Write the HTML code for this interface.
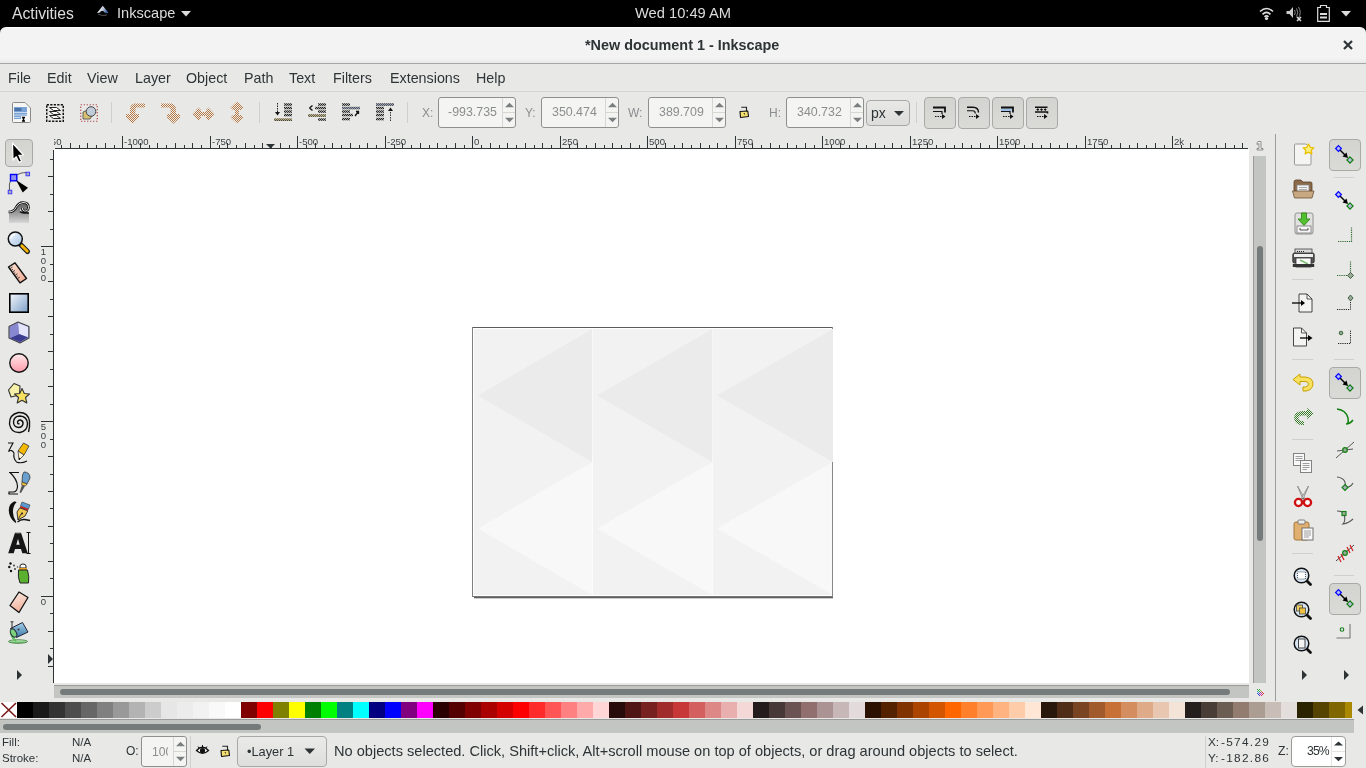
<!DOCTYPE html>
<html><head><meta charset="utf-8">
<style>
*{box-sizing:border-box}
html,body{margin:0;padding:0;width:1366px;height:768px;overflow:hidden;background:#e8e8e7;font-family:"Liberation Sans",sans-serif;color:#2e3436}
.a{position:absolute}
.t{position:absolute;white-space:pre;line-height:1;will-change:transform}
svg{position:absolute;overflow:visible}
</style></head><body>
<!-- top bar -->
<div class="a" style="left:0;top:0;width:1366px;height:36px;background:#000"></div>
<div class="t" style="left:12px;top:6px;font-size:15.7px;color:#dcdcdc">Activities</div>
<div class="t" style="left:117px;top:6px;font-size:14.6px;color:#dcdcdc">Inkscape</div>
<div class="t" style="left:635px;top:6px;font-size:14.7px;color:#dcdcdc">Wed 10:49 AM</div>

<!-- title bar -->
<div class="a" style="left:0;top:27px;width:1366px;height:37px;background:linear-gradient(#f3f3f3,#f3f3f3 86%,#e9e9e9);border-radius:6px 6px 0 0;border-top:1px solid #fff;border-bottom:1px solid #a6a6a3"></div>
<div class="t" style="left:585px;top:38px;font-size:14.4px;font-weight:bold;color:#2e3436">*New document 1 - Inkscape</div>

<!-- menubar -->
<div class="a" style="left:0;top:64px;width:1366px;height:29px;background:linear-gradient(#e8e8e7 0,#e8e8e7 26px,#ebebea 26px,#ebebea 27px,#d2d2d0 27px,#d2d2d0 28px,#ebebea 28px)"></div>
<div class="t" style="left:8px;top:71px;font-size:14.3px">File</div>
<div class="t" style="left:47px;top:71px;font-size:14.3px">Edit</div>
<div class="t" style="left:87px;top:71px;font-size:14.3px">View</div>
<div class="t" style="left:135px;top:71px;font-size:14.3px">Layer</div>
<div class="t" style="left:186px;top:71px;font-size:14.3px">Object</div>
<div class="t" style="left:244px;top:71px;font-size:14.3px">Path</div>
<div class="t" style="left:289px;top:71px;font-size:14.3px">Text</div>
<div class="t" style="left:333px;top:71px;font-size:14.3px">Filters</div>
<div class="t" style="left:390px;top:71px;font-size:14.3px">Extensions</div>
<div class="t" style="left:476px;top:71px;font-size:14.3px">Help</div>

<!-- canvas -->
<div class="a" style="left:54px;top:149px;width:1195px;height:534px;background:#fff"></div>

<!-- rulers -->
<div class="a" style="left:55px;top:148px;width:1193px;height:1px;background:#2e3436"></div>
<div class="a" style="left:53px;top:150px;width:1px;height:533px;background:#2e3436"></div>

<!-- v scrollbar -->
<div class="a" style="left:1253px;top:156px;width:13px;height:527px;background:#c3c5c3;border-left:1px solid #9a9b98"></div>
<div class="a" style="left:1257px;top:246px;width:6px;height:295px;background:#757a7a;border-radius:3px"></div>
<div class="a" style="left:1275px;top:134px;width:1px;height:567px;background:#9c9c99"></div>

<!-- h scrollbar -->
<div class="a" style="left:54px;top:685px;width:1195px;height:13px;background:#c3c5c3;border-top:1px solid #9a9b98"></div>
<div class="a" style="left:60px;top:689px;width:1170px;height:6px;background:#757a7a;border-radius:3px"></div>

<!-- palette -->
<div class="a" style="left:0;top:719px;width:1354px;height:14px;background:#c3c5c3;border-top:1px solid #9a9b98"></div>
<div class="a" style="left:3px;top:724px;width:258px;height:6px;background:#757a7a;border-radius:3px"></div>

<!--RULERH--><svg style="left:0;top:0" width="1366" height="160"><defs><clipPath id="hc"><rect x="54" y="130" width="1194" height="20"/></clipPath></defs><g clip-path="url(#hc)"><line x1="35.5" y1="136" x2="35.5" y2="149" stroke="#2e3436" stroke-width="1"/><text x="37.0" y="145" font-size="9.6" fill="#3a3f41" font-family="Liberation Sans">-1250</text><line x1="44.5" y1="145" x2="44.5" y2="149" stroke="#2e3436" stroke-width="1"/><line x1="52.5" y1="143" x2="52.5" y2="149" stroke="#2e3436" stroke-width="1"/><line x1="61.5" y1="145" x2="61.5" y2="149" stroke="#2e3436" stroke-width="1"/><line x1="70.5" y1="143" x2="70.5" y2="149" stroke="#2e3436" stroke-width="1"/><line x1="79.5" y1="145" x2="79.5" y2="149" stroke="#2e3436" stroke-width="1"/><line x1="87.5" y1="143" x2="87.5" y2="149" stroke="#2e3436" stroke-width="1"/><line x1="96.5" y1="145" x2="96.5" y2="149" stroke="#2e3436" stroke-width="1"/><line x1="105.5" y1="143" x2="105.5" y2="149" stroke="#2e3436" stroke-width="1"/><line x1="114.5" y1="145" x2="114.5" y2="149" stroke="#2e3436" stroke-width="1"/><line x1="122.5" y1="136" x2="122.5" y2="149" stroke="#2e3436" stroke-width="1"/><text x="124.0" y="145" font-size="9.6" fill="#3a3f41" font-family="Liberation Sans">-1000</text><line x1="131.5" y1="145" x2="131.5" y2="149" stroke="#2e3436" stroke-width="1"/><line x1="140.5" y1="143" x2="140.5" y2="149" stroke="#2e3436" stroke-width="1"/><line x1="149.5" y1="145" x2="149.5" y2="149" stroke="#2e3436" stroke-width="1"/><line x1="157.5" y1="143" x2="157.5" y2="149" stroke="#2e3436" stroke-width="1"/><line x1="166.5" y1="145" x2="166.5" y2="149" stroke="#2e3436" stroke-width="1"/><line x1="175.5" y1="143" x2="175.5" y2="149" stroke="#2e3436" stroke-width="1"/><line x1="184.5" y1="145" x2="184.5" y2="149" stroke="#2e3436" stroke-width="1"/><line x1="192.5" y1="143" x2="192.5" y2="149" stroke="#2e3436" stroke-width="1"/><line x1="201.5" y1="145" x2="201.5" y2="149" stroke="#2e3436" stroke-width="1"/><line x1="210.5" y1="136" x2="210.5" y2="149" stroke="#2e3436" stroke-width="1"/><text x="212.0" y="145" font-size="9.6" fill="#3a3f41" font-family="Liberation Sans">-750</text><line x1="219.5" y1="145" x2="219.5" y2="149" stroke="#2e3436" stroke-width="1"/><line x1="227.5" y1="143" x2="227.5" y2="149" stroke="#2e3436" stroke-width="1"/><line x1="236.5" y1="145" x2="236.5" y2="149" stroke="#2e3436" stroke-width="1"/><line x1="245.5" y1="143" x2="245.5" y2="149" stroke="#2e3436" stroke-width="1"/><line x1="254.5" y1="145" x2="254.5" y2="149" stroke="#2e3436" stroke-width="1"/><line x1="262.5" y1="143" x2="262.5" y2="149" stroke="#2e3436" stroke-width="1"/><line x1="271.5" y1="145" x2="271.5" y2="149" stroke="#2e3436" stroke-width="1"/><line x1="280.5" y1="143" x2="280.5" y2="149" stroke="#2e3436" stroke-width="1"/><line x1="289.5" y1="145" x2="289.5" y2="149" stroke="#2e3436" stroke-width="1"/><line x1="297.5" y1="136" x2="297.5" y2="149" stroke="#2e3436" stroke-width="1"/><text x="299.0" y="145" font-size="9.6" fill="#3a3f41" font-family="Liberation Sans">-500</text><line x1="306.5" y1="145" x2="306.5" y2="149" stroke="#2e3436" stroke-width="1"/><line x1="315.5" y1="143" x2="315.5" y2="149" stroke="#2e3436" stroke-width="1"/><line x1="324.5" y1="145" x2="324.5" y2="149" stroke="#2e3436" stroke-width="1"/><line x1="332.5" y1="143" x2="332.5" y2="149" stroke="#2e3436" stroke-width="1"/><line x1="341.5" y1="145" x2="341.5" y2="149" stroke="#2e3436" stroke-width="1"/><line x1="350.5" y1="143" x2="350.5" y2="149" stroke="#2e3436" stroke-width="1"/><line x1="359.5" y1="145" x2="359.5" y2="149" stroke="#2e3436" stroke-width="1"/><line x1="367.5" y1="143" x2="367.5" y2="149" stroke="#2e3436" stroke-width="1"/><line x1="376.5" y1="145" x2="376.5" y2="149" stroke="#2e3436" stroke-width="1"/><line x1="385.5" y1="136" x2="385.5" y2="149" stroke="#2e3436" stroke-width="1"/><text x="387.0" y="145" font-size="9.6" fill="#3a3f41" font-family="Liberation Sans">-250</text><line x1="394.5" y1="145" x2="394.5" y2="149" stroke="#2e3436" stroke-width="1"/><line x1="402.5" y1="143" x2="402.5" y2="149" stroke="#2e3436" stroke-width="1"/><line x1="411.5" y1="145" x2="411.5" y2="149" stroke="#2e3436" stroke-width="1"/><line x1="420.5" y1="143" x2="420.5" y2="149" stroke="#2e3436" stroke-width="1"/><line x1="429.5" y1="145" x2="429.5" y2="149" stroke="#2e3436" stroke-width="1"/><line x1="437.5" y1="143" x2="437.5" y2="149" stroke="#2e3436" stroke-width="1"/><line x1="446.5" y1="145" x2="446.5" y2="149" stroke="#2e3436" stroke-width="1"/><line x1="455.5" y1="143" x2="455.5" y2="149" stroke="#2e3436" stroke-width="1"/><line x1="464.5" y1="145" x2="464.5" y2="149" stroke="#2e3436" stroke-width="1"/><line x1="472.5" y1="136" x2="472.5" y2="149" stroke="#2e3436" stroke-width="1"/><text x="474.0" y="145" font-size="9.6" fill="#3a3f41" font-family="Liberation Sans">0</text><line x1="481.5" y1="145" x2="481.5" y2="149" stroke="#2e3436" stroke-width="1"/><line x1="490.5" y1="143" x2="490.5" y2="149" stroke="#2e3436" stroke-width="1"/><line x1="499.5" y1="145" x2="499.5" y2="149" stroke="#2e3436" stroke-width="1"/><line x1="507.5" y1="143" x2="507.5" y2="149" stroke="#2e3436" stroke-width="1"/><line x1="516.5" y1="145" x2="516.5" y2="149" stroke="#2e3436" stroke-width="1"/><line x1="525.5" y1="143" x2="525.5" y2="149" stroke="#2e3436" stroke-width="1"/><line x1="534.5" y1="145" x2="534.5" y2="149" stroke="#2e3436" stroke-width="1"/><line x1="542.5" y1="143" x2="542.5" y2="149" stroke="#2e3436" stroke-width="1"/><line x1="551.5" y1="145" x2="551.5" y2="149" stroke="#2e3436" stroke-width="1"/><line x1="560.5" y1="136" x2="560.5" y2="149" stroke="#2e3436" stroke-width="1"/><text x="562.0" y="145" font-size="9.6" fill="#3a3f41" font-family="Liberation Sans">250</text><line x1="569.5" y1="145" x2="569.5" y2="149" stroke="#2e3436" stroke-width="1"/><line x1="577.5" y1="143" x2="577.5" y2="149" stroke="#2e3436" stroke-width="1"/><line x1="586.5" y1="145" x2="586.5" y2="149" stroke="#2e3436" stroke-width="1"/><line x1="595.5" y1="143" x2="595.5" y2="149" stroke="#2e3436" stroke-width="1"/><line x1="604.5" y1="145" x2="604.5" y2="149" stroke="#2e3436" stroke-width="1"/><line x1="612.5" y1="143" x2="612.5" y2="149" stroke="#2e3436" stroke-width="1"/><line x1="621.5" y1="145" x2="621.5" y2="149" stroke="#2e3436" stroke-width="1"/><line x1="630.5" y1="143" x2="630.5" y2="149" stroke="#2e3436" stroke-width="1"/><line x1="639.5" y1="145" x2="639.5" y2="149" stroke="#2e3436" stroke-width="1"/><line x1="647.5" y1="136" x2="647.5" y2="149" stroke="#2e3436" stroke-width="1"/><text x="649.0" y="145" font-size="9.6" fill="#3a3f41" font-family="Liberation Sans">500</text><line x1="656.5" y1="145" x2="656.5" y2="149" stroke="#2e3436" stroke-width="1"/><line x1="665.5" y1="143" x2="665.5" y2="149" stroke="#2e3436" stroke-width="1"/><line x1="674.5" y1="145" x2="674.5" y2="149" stroke="#2e3436" stroke-width="1"/><line x1="682.5" y1="143" x2="682.5" y2="149" stroke="#2e3436" stroke-width="1"/><line x1="691.5" y1="145" x2="691.5" y2="149" stroke="#2e3436" stroke-width="1"/><line x1="700.5" y1="143" x2="700.5" y2="149" stroke="#2e3436" stroke-width="1"/><line x1="709.5" y1="145" x2="709.5" y2="149" stroke="#2e3436" stroke-width="1"/><line x1="717.5" y1="143" x2="717.5" y2="149" stroke="#2e3436" stroke-width="1"/><line x1="726.5" y1="145" x2="726.5" y2="149" stroke="#2e3436" stroke-width="1"/><line x1="735.5" y1="136" x2="735.5" y2="149" stroke="#2e3436" stroke-width="1"/><text x="737.0" y="145" font-size="9.6" fill="#3a3f41" font-family="Liberation Sans">750</text><line x1="744.5" y1="145" x2="744.5" y2="149" stroke="#2e3436" stroke-width="1"/><line x1="752.5" y1="143" x2="752.5" y2="149" stroke="#2e3436" stroke-width="1"/><line x1="761.5" y1="145" x2="761.5" y2="149" stroke="#2e3436" stroke-width="1"/><line x1="770.5" y1="143" x2="770.5" y2="149" stroke="#2e3436" stroke-width="1"/><line x1="779.5" y1="145" x2="779.5" y2="149" stroke="#2e3436" stroke-width="1"/><line x1="787.5" y1="143" x2="787.5" y2="149" stroke="#2e3436" stroke-width="1"/><line x1="796.5" y1="145" x2="796.5" y2="149" stroke="#2e3436" stroke-width="1"/><line x1="805.5" y1="143" x2="805.5" y2="149" stroke="#2e3436" stroke-width="1"/><line x1="814.5" y1="145" x2="814.5" y2="149" stroke="#2e3436" stroke-width="1"/><line x1="822.5" y1="136" x2="822.5" y2="149" stroke="#2e3436" stroke-width="1"/><text x="824.0" y="145" font-size="9.6" fill="#3a3f41" font-family="Liberation Sans">1000</text><line x1="831.5" y1="145" x2="831.5" y2="149" stroke="#2e3436" stroke-width="1"/><line x1="840.5" y1="143" x2="840.5" y2="149" stroke="#2e3436" stroke-width="1"/><line x1="849.5" y1="145" x2="849.5" y2="149" stroke="#2e3436" stroke-width="1"/><line x1="857.5" y1="143" x2="857.5" y2="149" stroke="#2e3436" stroke-width="1"/><line x1="866.5" y1="145" x2="866.5" y2="149" stroke="#2e3436" stroke-width="1"/><line x1="875.5" y1="143" x2="875.5" y2="149" stroke="#2e3436" stroke-width="1"/><line x1="884.5" y1="145" x2="884.5" y2="149" stroke="#2e3436" stroke-width="1"/><line x1="892.5" y1="143" x2="892.5" y2="149" stroke="#2e3436" stroke-width="1"/><line x1="901.5" y1="145" x2="901.5" y2="149" stroke="#2e3436" stroke-width="1"/><line x1="910.5" y1="136" x2="910.5" y2="149" stroke="#2e3436" stroke-width="1"/><text x="912.0" y="145" font-size="9.6" fill="#3a3f41" font-family="Liberation Sans">1250</text><line x1="919.5" y1="145" x2="919.5" y2="149" stroke="#2e3436" stroke-width="1"/><line x1="927.5" y1="143" x2="927.5" y2="149" stroke="#2e3436" stroke-width="1"/><line x1="936.5" y1="145" x2="936.5" y2="149" stroke="#2e3436" stroke-width="1"/><line x1="945.5" y1="143" x2="945.5" y2="149" stroke="#2e3436" stroke-width="1"/><line x1="954.5" y1="145" x2="954.5" y2="149" stroke="#2e3436" stroke-width="1"/><line x1="962.5" y1="143" x2="962.5" y2="149" stroke="#2e3436" stroke-width="1"/><line x1="971.5" y1="145" x2="971.5" y2="149" stroke="#2e3436" stroke-width="1"/><line x1="980.5" y1="143" x2="980.5" y2="149" stroke="#2e3436" stroke-width="1"/><line x1="989.5" y1="145" x2="989.5" y2="149" stroke="#2e3436" stroke-width="1"/><line x1="997.5" y1="136" x2="997.5" y2="149" stroke="#2e3436" stroke-width="1"/><text x="999.0" y="145" font-size="9.6" fill="#3a3f41" font-family="Liberation Sans">1500</text><line x1="1006.5" y1="145" x2="1006.5" y2="149" stroke="#2e3436" stroke-width="1"/><line x1="1015.5" y1="143" x2="1015.5" y2="149" stroke="#2e3436" stroke-width="1"/><line x1="1024.5" y1="145" x2="1024.5" y2="149" stroke="#2e3436" stroke-width="1"/><line x1="1032.5" y1="143" x2="1032.5" y2="149" stroke="#2e3436" stroke-width="1"/><line x1="1041.5" y1="145" x2="1041.5" y2="149" stroke="#2e3436" stroke-width="1"/><line x1="1050.5" y1="143" x2="1050.5" y2="149" stroke="#2e3436" stroke-width="1"/><line x1="1059.5" y1="145" x2="1059.5" y2="149" stroke="#2e3436" stroke-width="1"/><line x1="1067.5" y1="143" x2="1067.5" y2="149" stroke="#2e3436" stroke-width="1"/><line x1="1076.5" y1="145" x2="1076.5" y2="149" stroke="#2e3436" stroke-width="1"/><line x1="1085.5" y1="136" x2="1085.5" y2="149" stroke="#2e3436" stroke-width="1"/><text x="1087.0" y="145" font-size="9.6" fill="#3a3f41" font-family="Liberation Sans">1750</text><line x1="1094.5" y1="145" x2="1094.5" y2="149" stroke="#2e3436" stroke-width="1"/><line x1="1102.5" y1="143" x2="1102.5" y2="149" stroke="#2e3436" stroke-width="1"/><line x1="1111.5" y1="145" x2="1111.5" y2="149" stroke="#2e3436" stroke-width="1"/><line x1="1120.5" y1="143" x2="1120.5" y2="149" stroke="#2e3436" stroke-width="1"/><line x1="1129.5" y1="145" x2="1129.5" y2="149" stroke="#2e3436" stroke-width="1"/><line x1="1137.5" y1="143" x2="1137.5" y2="149" stroke="#2e3436" stroke-width="1"/><line x1="1146.5" y1="145" x2="1146.5" y2="149" stroke="#2e3436" stroke-width="1"/><line x1="1155.5" y1="143" x2="1155.5" y2="149" stroke="#2e3436" stroke-width="1"/><line x1="1164.5" y1="145" x2="1164.5" y2="149" stroke="#2e3436" stroke-width="1"/><line x1="1172.5" y1="136" x2="1172.5" y2="149" stroke="#2e3436" stroke-width="1"/><text x="1174.0" y="145" font-size="9.6" fill="#3a3f41" font-family="Liberation Sans">2k</text><line x1="1181.5" y1="145" x2="1181.5" y2="149" stroke="#2e3436" stroke-width="1"/><line x1="1190.5" y1="143" x2="1190.5" y2="149" stroke="#2e3436" stroke-width="1"/><line x1="1199.5" y1="145" x2="1199.5" y2="149" stroke="#2e3436" stroke-width="1"/><line x1="1207.5" y1="143" x2="1207.5" y2="149" stroke="#2e3436" stroke-width="1"/><line x1="1216.5" y1="145" x2="1216.5" y2="149" stroke="#2e3436" stroke-width="1"/><line x1="1225.5" y1="143" x2="1225.5" y2="149" stroke="#2e3436" stroke-width="1"/><line x1="1234.5" y1="145" x2="1234.5" y2="149" stroke="#2e3436" stroke-width="1"/><line x1="1242.5" y1="143" x2="1242.5" y2="149" stroke="#2e3436" stroke-width="1"/></g><line x1="55" y1="148.5" x2="1248" y2="148.5" stroke="#2e3436" stroke-width="1"/><path d="M266,144 L275,144 L270.5,148.5 Z" fill="#2e3436"/></svg><!--/RULERH-->
<!--RULERV--><svg style="left:0;top:0" width="60" height="700"><defs><clipPath id="vc"><rect x="36" y="149" width="20" height="534"/></clipPath></defs><g clip-path="url(#vc)"><line x1="50" y1="683.5" x2="54" y2="683.5" stroke="#2e3436" stroke-width="1"/><line x1="48" y1="666.5" x2="54" y2="666.5" stroke="#2e3436" stroke-width="1"/><line x1="50" y1="648.5" x2="54" y2="648.5" stroke="#2e3436" stroke-width="1"/><line x1="48" y1="631.5" x2="54" y2="631.5" stroke="#2e3436" stroke-width="1"/><line x1="50" y1="613.5" x2="54" y2="613.5" stroke="#2e3436" stroke-width="1"/><line x1="41" y1="596.5" x2="54" y2="596.5" stroke="#2e3436" stroke-width="1"/><text x="43.5" y="604.9" font-size="9.6" text-anchor="middle" fill="#3a3f41" font-family="Liberation Sans">0</text><line x1="50" y1="578.5" x2="54" y2="578.5" stroke="#2e3436" stroke-width="1"/><line x1="48" y1="561.5" x2="54" y2="561.5" stroke="#2e3436" stroke-width="1"/><line x1="50" y1="543.5" x2="54" y2="543.5" stroke="#2e3436" stroke-width="1"/><line x1="48" y1="526.5" x2="54" y2="526.5" stroke="#2e3436" stroke-width="1"/><line x1="50" y1="508.5" x2="54" y2="508.5" stroke="#2e3436" stroke-width="1"/><line x1="48" y1="491.5" x2="54" y2="491.5" stroke="#2e3436" stroke-width="1"/><line x1="50" y1="474.5" x2="54" y2="474.5" stroke="#2e3436" stroke-width="1"/><line x1="48" y1="456.5" x2="54" y2="456.5" stroke="#2e3436" stroke-width="1"/><line x1="50" y1="439.5" x2="54" y2="439.5" stroke="#2e3436" stroke-width="1"/><line x1="41" y1="421.5" x2="54" y2="421.5" stroke="#2e3436" stroke-width="1"/><text x="43.5" y="429.9" font-size="9.6" text-anchor="middle" fill="#3a3f41" font-family="Liberation Sans">5</text><text x="43.5" y="438.7" font-size="9.6" text-anchor="middle" fill="#3a3f41" font-family="Liberation Sans">0</text><text x="43.5" y="447.5" font-size="9.6" text-anchor="middle" fill="#3a3f41" font-family="Liberation Sans">0</text><line x1="50" y1="404.5" x2="54" y2="404.5" stroke="#2e3436" stroke-width="1"/><line x1="48" y1="386.5" x2="54" y2="386.5" stroke="#2e3436" stroke-width="1"/><line x1="50" y1="369.5" x2="54" y2="369.5" stroke="#2e3436" stroke-width="1"/><line x1="48" y1="351.5" x2="54" y2="351.5" stroke="#2e3436" stroke-width="1"/><line x1="50" y1="334.5" x2="54" y2="334.5" stroke="#2e3436" stroke-width="1"/><line x1="48" y1="316.5" x2="54" y2="316.5" stroke="#2e3436" stroke-width="1"/><line x1="50" y1="299.5" x2="54" y2="299.5" stroke="#2e3436" stroke-width="1"/><line x1="48" y1="281.5" x2="54" y2="281.5" stroke="#2e3436" stroke-width="1"/><line x1="50" y1="264.5" x2="54" y2="264.5" stroke="#2e3436" stroke-width="1"/><line x1="41" y1="246.5" x2="54" y2="246.5" stroke="#2e3436" stroke-width="1"/><text x="43.5" y="254.9" font-size="9.6" text-anchor="middle" fill="#3a3f41" font-family="Liberation Sans">1</text><text x="43.5" y="263.7" font-size="9.6" text-anchor="middle" fill="#3a3f41" font-family="Liberation Sans">0</text><text x="43.5" y="272.5" font-size="9.6" text-anchor="middle" fill="#3a3f41" font-family="Liberation Sans">0</text><text x="43.5" y="281.3" font-size="9.6" text-anchor="middle" fill="#3a3f41" font-family="Liberation Sans">0</text><line x1="50" y1="229.5" x2="54" y2="229.5" stroke="#2e3436" stroke-width="1"/><line x1="48" y1="211.5" x2="54" y2="211.5" stroke="#2e3436" stroke-width="1"/><line x1="50" y1="194.5" x2="54" y2="194.5" stroke="#2e3436" stroke-width="1"/><line x1="48" y1="176.5" x2="54" y2="176.5" stroke="#2e3436" stroke-width="1"/><line x1="50" y1="159.5" x2="54" y2="159.5" stroke="#2e3436" stroke-width="1"/><line x1="48" y1="141.5" x2="54" y2="141.5" stroke="#2e3436" stroke-width="1"/></g><line x1="53.5" y1="150" x2="53.5" y2="683" stroke="#2e3436" stroke-width="1"/><path d="M48,654 L48,664 L53,659 Z" fill="#2e3436"/></svg><!--/RULERV-->
<!--PALETTE--><div class="a" style="left:0;top:702px;width:1352px;height:16px;overflow:hidden"><div class="a" style="left:0;top:0;width:17px;height:16px;background:#fff"></div><svg style="left:0;top:0" width="17" height="16"><path d="M1.5,1 L16,15 M16,1 L1.5,15" stroke="#7a1a1a" stroke-width="1.6"/></svg><div class="a" style="left:17px;top:0;width:16px;height:16px;background:#000000"></div><div class="a" style="left:33px;top:0;width:16px;height:16px;background:#1A1A1A"></div><div class="a" style="left:49px;top:0;width:16px;height:16px;background:#333333"></div><div class="a" style="left:65px;top:0;width:16px;height:16px;background:#4D4D4D"></div><div class="a" style="left:81px;top:0;width:16px;height:16px;background:#666666"></div><div class="a" style="left:97px;top:0;width:16px;height:16px;background:#808080"></div><div class="a" style="left:113px;top:0;width:16px;height:16px;background:#999999"></div><div class="a" style="left:129px;top:0;width:16px;height:16px;background:#B3B3B3"></div><div class="a" style="left:145px;top:0;width:16px;height:16px;background:#CCCCCC"></div><div class="a" style="left:161px;top:0;width:16px;height:16px;background:#E6E6E6"></div><div class="a" style="left:177px;top:0;width:16px;height:16px;background:#ECECEC"></div><div class="a" style="left:193px;top:0;width:16px;height:16px;background:#F2F2F2"></div><div class="a" style="left:209px;top:0;width:16px;height:16px;background:#F9F9F9"></div><div class="a" style="left:225px;top:0;width:16px;height:16px;background:#FFFFFF"></div><div class="a" style="left:241px;top:0;width:16px;height:16px;background:#800000"></div><div class="a" style="left:257px;top:0;width:16px;height:16px;background:#FF0000"></div><div class="a" style="left:273px;top:0;width:16px;height:16px;background:#808000"></div><div class="a" style="left:289px;top:0;width:16px;height:16px;background:#FFFF00"></div><div class="a" style="left:305px;top:0;width:16px;height:16px;background:#008000"></div><div class="a" style="left:321px;top:0;width:16px;height:16px;background:#00FF00"></div><div class="a" style="left:337px;top:0;width:16px;height:16px;background:#008080"></div><div class="a" style="left:353px;top:0;width:16px;height:16px;background:#00FFFF"></div><div class="a" style="left:369px;top:0;width:16px;height:16px;background:#000080"></div><div class="a" style="left:385px;top:0;width:16px;height:16px;background:#0000FF"></div><div class="a" style="left:401px;top:0;width:16px;height:16px;background:#800080"></div><div class="a" style="left:417px;top:0;width:16px;height:16px;background:#FF00FF"></div><div class="a" style="left:433px;top:0;width:16px;height:16px;background:#2B0000"></div><div class="a" style="left:449px;top:0;width:16px;height:16px;background:#550000"></div><div class="a" style="left:465px;top:0;width:16px;height:16px;background:#800000"></div><div class="a" style="left:481px;top:0;width:16px;height:16px;background:#AA0000"></div><div class="a" style="left:497px;top:0;width:16px;height:16px;background:#D40000"></div><div class="a" style="left:513px;top:0;width:16px;height:16px;background:#FF0000"></div><div class="a" style="left:529px;top:0;width:16px;height:16px;background:#FF2A2A"></div><div class="a" style="left:545px;top:0;width:16px;height:16px;background:#FF5555"></div><div class="a" style="left:561px;top:0;width:16px;height:16px;background:#FF8080"></div><div class="a" style="left:577px;top:0;width:16px;height:16px;background:#FFAAAA"></div><div class="a" style="left:593px;top:0;width:16px;height:16px;background:#FFD5D5"></div><div class="a" style="left:609px;top:0;width:16px;height:16px;background:#280B0B"></div><div class="a" style="left:625px;top:0;width:16px;height:16px;background:#501616"></div><div class="a" style="left:641px;top:0;width:16px;height:16px;background:#782121"></div><div class="a" style="left:657px;top:0;width:16px;height:16px;background:#A02C2C"></div><div class="a" style="left:673px;top:0;width:16px;height:16px;background:#C83737"></div><div class="a" style="left:689px;top:0;width:16px;height:16px;background:#D35F5F"></div><div class="a" style="left:705px;top:0;width:16px;height:16px;background:#DE8787"></div><div class="a" style="left:721px;top:0;width:16px;height:16px;background:#E9AFAF"></div><div class="a" style="left:737px;top:0;width:16px;height:16px;background:#F4D7D7"></div><div class="a" style="left:753px;top:0;width:16px;height:16px;background:#241C1C"></div><div class="a" style="left:769px;top:0;width:16px;height:16px;background:#483737"></div><div class="a" style="left:785px;top:0;width:16px;height:16px;background:#6C5353"></div><div class="a" style="left:801px;top:0;width:16px;height:16px;background:#916F6F"></div><div class="a" style="left:817px;top:0;width:16px;height:16px;background:#AC9393"></div><div class="a" style="left:833px;top:0;width:16px;height:16px;background:#C8B7B7"></div><div class="a" style="left:849px;top:0;width:16px;height:16px;background:#E3DBDB"></div><div class="a" style="left:865px;top:0;width:16px;height:16px;background:#2B1100"></div><div class="a" style="left:881px;top:0;width:16px;height:16px;background:#552200"></div><div class="a" style="left:897px;top:0;width:16px;height:16px;background:#803300"></div><div class="a" style="left:913px;top:0;width:16px;height:16px;background:#AA4400"></div><div class="a" style="left:929px;top:0;width:16px;height:16px;background:#D45500"></div><div class="a" style="left:945px;top:0;width:16px;height:16px;background:#FF6600"></div><div class="a" style="left:961px;top:0;width:16px;height:16px;background:#FF7F2A"></div><div class="a" style="left:977px;top:0;width:16px;height:16px;background:#FF9955"></div><div class="a" style="left:993px;top:0;width:16px;height:16px;background:#FFB380"></div><div class="a" style="left:1009px;top:0;width:16px;height:16px;background:#FFCCAA"></div><div class="a" style="left:1025px;top:0;width:16px;height:16px;background:#FFE6D5"></div><div class="a" style="left:1041px;top:0;width:16px;height:16px;background:#28170B"></div><div class="a" style="left:1057px;top:0;width:16px;height:16px;background:#502D16"></div><div class="a" style="left:1073px;top:0;width:16px;height:16px;background:#784421"></div><div class="a" style="left:1089px;top:0;width:16px;height:16px;background:#A05A2C"></div><div class="a" style="left:1105px;top:0;width:16px;height:16px;background:#C87137"></div><div class="a" style="left:1121px;top:0;width:16px;height:16px;background:#D38D5F"></div><div class="a" style="left:1137px;top:0;width:16px;height:16px;background:#DEAA87"></div><div class="a" style="left:1153px;top:0;width:16px;height:16px;background:#E9C6AF"></div><div class="a" style="left:1169px;top:0;width:16px;height:16px;background:#F4E3D7"></div><div class="a" style="left:1185px;top:0;width:16px;height:16px;background:#241F1C"></div><div class="a" style="left:1201px;top:0;width:16px;height:16px;background:#483E37"></div><div class="a" style="left:1217px;top:0;width:16px;height:16px;background:#6C5D53"></div><div class="a" style="left:1233px;top:0;width:16px;height:16px;background:#917C6F"></div><div class="a" style="left:1249px;top:0;width:16px;height:16px;background:#AC9D93"></div><div class="a" style="left:1265px;top:0;width:16px;height:16px;background:#C8BEB7"></div><div class="a" style="left:1281px;top:0;width:16px;height:16px;background:#E3DEDB"></div><div class="a" style="left:1297px;top:0;width:16px;height:16px;background:#2B2200"></div><div class="a" style="left:1313px;top:0;width:16px;height:16px;background:#554400"></div><div class="a" style="left:1329px;top:0;width:16px;height:16px;background:#806600"></div><div class="a" style="left:1345px;top:0;width:16px;height:16px;background:#AA8800"></div></div><svg style="left:1352px;top:702px" width="14" height="16"><path d="M5.5,8 L11,3.5 L11,12.5 Z" fill="#2e3436"/></svg><!--/PALETTE-->
<!--PAGE--><svg style="left:0;top:0" width="1366" height="768"><rect x="472" y="327" width="361" height="271" fill="#fff"/><rect x="472" y="327" width="360" height="1" fill="#5c5c5c"/><rect x="472" y="327" width="1" height="270" fill="#808080"/><rect x="832" y="327" width="1" height="270" fill="#888"/><rect x="472" y="596" width="361" height="1" fill="#777"/><rect x="474" y="597" width="359" height="1.3" fill="#5e5e5e"/><rect x="474" y="329" width="118.20000000000005" height="133" fill="#f2f2f2"/><path d="M592.2,329 L478,395.5 L592.2,462 Z" fill="#ebebeb"/><rect x="474" y="462" width="118.20000000000005" height="133" fill="#f2f2f2"/><path d="M592.2,462 L478,528.5 L592.2,595 Z" fill="#f8f8f8"/><rect x="593" y="329" width="119.29999999999995" height="133" fill="#f2f2f2"/><path d="M712.3,329 L597,395.5 L712.3,462 Z" fill="#ebebeb"/><rect x="593" y="462" width="119.29999999999995" height="133" fill="#f2f2f2"/><path d="M712.3,462 L597,528.5 L712.3,595 Z" fill="#f8f8f8"/><rect x="713" y="329" width="120" height="133" fill="#f2f2f2"/><path d="M833,329 L717,395.5 L833,462 Z" fill="#ebebeb"/><rect x="713" y="462" width="120" height="133" fill="#f2f2f2"/><path d="M833,462 L717,528.5 L833,595 Z" fill="#f8f8f8"/><rect x="831" y="462" width="1" height="133" fill="#fafafa"/><rect x="832" y="462" width="1" height="135" fill="#888"/></svg><!--/PAGE-->
<!--TOPTB--><svg style="left:12px;top:102px" width="19" height="21" viewBox="0 0 19 21"><path d="M0.5,1.5 Q0.5,0.5 1.5,0.5 L13,0.5 L18.5,6 L18.5,19.5 Q18.5,20.5 17.5,20.5 L1.5,20.5 Q0.5,20.5 0.5,19.5 Z" fill="#f6f6f4" stroke="#8a8a88"/><rect x="2" y="5" width="13" height="12" fill="#7aa3d8"/><rect x="2.5" y="6" width="7" height="3" fill="#4a72a8"/><path d="M2,10.5 H15 M2,13 H15 M2,15.5 H8" stroke="#dfe8f3" stroke-width="0.8"/><rect x="9" y="14" width="8" height="6" fill="#f6f6f4"/><path d="M10,15.5 H13 M11.5,15.5 V19 M10,19 H13" stroke="#000" stroke-width="1.5"/></svg><svg style="left:46px;top:104px" width="18" height="18" viewBox="0 0 18 18"><rect x="0.75" y="0.75" width="16.5" height="16.5" fill="none" stroke="#111" stroke-width="1.5" stroke-dasharray="2.2,1.3"/><path d="M3.5,11.5 L10.5,11.5 L14.5,14.5 L7.5,14.5 Z" fill="#f4f4f4" stroke="#222" stroke-width="1"/><path d="M3.5,7.5 L10.5,7.5 L14.5,10.5 L7.5,10.5 Z" fill="#f8f8f8" stroke="#222" stroke-width="1"/><path d="M3.5,3.5 L10.5,3.5 L14.5,6.5 L7.5,6.5 Z" fill="#fff" stroke="#222" stroke-width="1"/></svg><svg style="left:80px;top:104px" width="18" height="18" viewBox="0 0 18 18"><rect x="0.75" y="0.75" width="16.5" height="16.5" fill="none" stroke="#a02020" stroke-width="1.2" stroke-dasharray="1,2"/><path d="M3,8 L8,6 L12,12 L10,15 L3,15 Z" fill="#d8c070" stroke="#555" stroke-width="0.9"/><circle cx="11" cy="7.5" r="4.8" fill="#c0ccd8" stroke="#444" stroke-width="1"/></svg><div class="a" style="left:111px;top:102px;width:1px;height:21px;background:#cfcfcc"></div><svg style="left:0;top:0" width="0" height="0"><defs><pattern id="chkb" width="2" height="2" patternUnits="userSpaceOnUse"><rect width="2" height="2" fill="#f2ece6"/><rect width="1" height="1" fill="#b27a4a"/><rect x="1" y="1" width="1" height="1" fill="#b27a4a"/></pattern><pattern id="chkd" width="2" height="2" patternUnits="userSpaceOnUse"><rect width="2" height="2" fill="#a8a8a8"/><rect width="1" height="1" fill="#222"/><rect x="1" y="1" width="1" height="1" fill="#222"/></pattern><pattern id="chkg" width="2" height="2" patternUnits="userSpaceOnUse"><rect width="2" height="2" fill="#e4ece0"/><rect width="1" height="1" fill="#3a7a30"/><rect x="1" y="1" width="1" height="1" fill="#3a7a30"/></pattern></defs></svg><svg style="left:122px;top:100px" width="28" height="26" viewBox="0 0 28 26"><path d="M8,14 V9 Q8,3.4 14,3.4 H23 V7.5 H15 Q13.5,7.5 13.5,9.5 V14 Z" fill="url(#chkb)"/><path d="M4,14 H17 V17.5 L10.5,23.7 L4,17.5 Z" fill="url(#chkb)"/></svg><svg style="left:156px;top:100px" width="28" height="26" viewBox="0 0 28 26"><path d="M20,14 V9 Q20,3.4 14,3.4 H5 V7.5 H13 Q14.5,7.5 14.5,9.5 V14 Z" fill="url(#chkb)"/><path d="M24,14 H11 V17.5 L17.5,23.7 L24,17.5 Z" fill="url(#chkb)"/></svg><svg style="left:192px;top:107px" width="23" height="15" viewBox="0 0 23 15"><path d="M0.5,7 L6.5,0.5 L9,3 V5 H14 V3 L16.5,0.5 L22.5,7 L16.5,13.5 L14,11 V9 H9 V11 L6.5,13.5 Z" fill="url(#chkb)"/></svg><svg style="left:230px;top:101px" width="15" height="23" viewBox="0 0 15 23"><path d="M7,0.5 L13.5,6.5 L11,9 H9 V14 H11 L13.5,16.5 L7,22.5 L0.5,16.5 L3,14 H5 V9 H3 L0.5,6.5 Z" fill="url(#chkb)"/></svg><div class="a" style="left:259px;top:102px;width:1px;height:21px;background:#cfcfcc"></div><svg style="left:274px;top:103px" width="19" height="19" viewBox="0 0 19 19"><rect x="10" y="0.30000000000000004" width="8" height="2.5" fill="url(#chkd)"/><rect x="10" y="3.8" width="8" height="2.5" fill="url(#chkd)"/><rect x="10" y="7.3" width="8" height="2.5" fill="url(#chkd)"/><rect x="10" y="10.8" width="8" height="2.5" fill="url(#chkd)"/><rect x="0" y="15.5" width="18" height="2.5" fill="url(#chkd)"/><rect x="0" y="15.5" width="18" height="2" fill="#c8b060" opacity="0.45"/><path d="M3.5,0 V11" stroke="#222" stroke-width="1" stroke-dasharray="1.5,1"/><path d="M1,9 L3.5,12.5 L6,9 Z" fill="#111"/></svg><svg style="left:308px;top:103px" width="19" height="19" viewBox="0 0 19 19"><rect x="10" y="0.30000000000000004" width="8" height="2.5" fill="url(#chkd)"/><rect x="7" y="3.8" width="11" height="2.5" fill="url(#chkd)"/><rect x="10" y="7.3" width="8" height="2.5" fill="url(#chkd)"/><rect x="0" y="11.3" width="18" height="2.5" fill="url(#chkd)"/><rect x="10" y="15.3" width="8" height="2.5" fill="url(#chkd)"/><rect x="0" y="11.5" width="18" height="2" fill="#c8b060" opacity="0.45"/><path d="M1.5,5 L4.5,2.5 M1.5,5 L4.5,7.5" stroke="#111" stroke-width="1.4"/></svg><svg style="left:342px;top:103px" width="19" height="19" viewBox="0 0 19 19"><rect x="0" y="0.30000000000000004" width="8" height="2.5" fill="url(#chkd)"/><rect x="0" y="3.8" width="18" height="2.5" fill="url(#chkd)"/><rect x="0" y="7.3" width="8" height="2.5" fill="url(#chkd)"/><rect x="0" y="10.8" width="11" height="2.5" fill="url(#chkd)"/><rect x="0" y="14.8" width="8" height="2.5" fill="url(#chkd)"/><rect x="0" y="4" width="18" height="2" fill="#8090b0" opacity="0.45"/><path d="M13,13 L16.5,8.5 M14,8.5 H16.5 V11" stroke="#111" stroke-width="1.3"/></svg><svg style="left:376px;top:103px" width="19" height="19" viewBox="0 0 19 19"><rect x="0" y="0.30000000000000004" width="18" height="2.5" fill="url(#chkd)"/><rect x="0" y="3.8" width="8" height="2.5" fill="url(#chkd)"/><rect x="0" y="7.3" width="8" height="2.5" fill="url(#chkd)"/><rect x="0" y="10.8" width="8" height="2.5" fill="url(#chkd)"/><rect x="0" y="14.8" width="8" height="2.5" fill="url(#chkd)"/><rect x="0" y="0.5" width="18" height="2" fill="#8090b0" opacity="0.45"/><path d="M14.5,18 V6" stroke="#333" stroke-width="1" stroke-dasharray="1.5,1"/><path d="M12,8 L14.5,4.5 L17,8 Z" fill="#111"/></svg><div class="a" style="left:407px;top:102px;width:1px;height:21px;background:#cfcfcc"></div><!--/TOPTB-->
<!--TOOLCTL--><div class="t" style="left:422px;top:106.8px;color:#8b8e8f;font-size:12px">X:</div><div class="a" style="left:438px;top:97px;width:78px;height:31px;background:#f4f4f2;border:1px solid #8f8f8b;border-radius:3px"></div><div class="a" style="left:502px;top:98px;width:1px;height:29px;background:#d6d6d3"></div><div class="a" style="left:503px;top:112px;width:12px;height:1px;background:#d6d6d3"></div><svg style="left:0;top:0" width="1366" height="768"><path d="M505.0,107.2 L514.0,107.2 L509.5,102.8 Z M505.0,117.8 L514.0,117.8 L509.5,122.2 Z" fill="#7c7f80"/></svg><div class="t" style="left:448px;top:105.8px;font-size:12.4px;color:#8b8e8f">-993.735</div><div class="t" style="left:525px;top:106.8px;color:#8b8e8f;font-size:12px">Y:</div><div class="a" style="left:541px;top:97px;width:78px;height:31px;background:#f4f4f2;border:1px solid #8f8f8b;border-radius:3px"></div><div class="a" style="left:605px;top:98px;width:1px;height:29px;background:#d6d6d3"></div><div class="a" style="left:606px;top:112px;width:12px;height:1px;background:#d6d6d3"></div><svg style="left:0;top:0" width="1366" height="768"><path d="M608.0,107.2 L617.0,107.2 L612.5,102.8 Z M608.0,117.8 L617.0,117.8 L612.5,122.2 Z" fill="#7c7f80"/></svg><div class="t" style="left:552px;top:105.8px;font-size:12.4px;color:#8b8e8f">350.474</div><div class="t" style="left:628px;top:106.8px;color:#8b8e8f;font-size:12px">W:</div><div class="a" style="left:648px;top:97px;width:78px;height:31px;background:#f4f4f2;border:1px solid #8f8f8b;border-radius:3px"></div><div class="a" style="left:712px;top:98px;width:1px;height:29px;background:#d6d6d3"></div><div class="a" style="left:713px;top:112px;width:12px;height:1px;background:#d6d6d3"></div><svg style="left:0;top:0" width="1366" height="768"><path d="M715.0,107.2 L724.0,107.2 L719.5,102.8 Z M715.0,117.8 L724.0,117.8 L719.5,122.2 Z" fill="#7c7f80"/></svg><div class="t" style="left:659px;top:105.8px;font-size:12.4px;color:#8b8e8f">389.709</div><svg style="left:738px;top:105px" width="12" height="14" viewBox="0 0 12 14"><path d="M3.3,2.3 H8.5 V6.5" fill="none" stroke="#222" stroke-width="1.1"/><path d="M2,6.5 L9.8,6 L10.5,11.5 L2.5,12.5 Z" fill="#f4e070" stroke="#111" stroke-width="1.1" stroke-linejoin="round"/><path d="M5.5,8.3 L7,8.2 L6.5,10 Z" fill="#111"/></svg><div class="t" style="left:769px;top:106.8px;color:#8b8e8f;font-size:12px">H:</div><div class="a" style="left:786px;top:97px;width:78px;height:31px;background:#f4f4f2;border:1px solid #8f8f8b;border-radius:3px"></div><div class="a" style="left:850px;top:98px;width:1px;height:29px;background:#d6d6d3"></div><div class="a" style="left:851px;top:112px;width:12px;height:1px;background:#d6d6d3"></div><svg style="left:0;top:0" width="1366" height="768"><path d="M853.0,107.2 L862.0,107.2 L857.5,102.8 Z M853.0,117.8 L862.0,117.8 L857.5,122.2 Z" fill="#7c7f80"/></svg><div class="t" style="left:797px;top:105.8px;font-size:12.4px;color:#8b8e8f">340.732</div><div class="a" style="left:866px;top:100px;width:44px;height:26px;border:1px solid #a8a8a5;border-radius:4px;background:linear-gradient(#e8e8e7,#dcdcda)"></div><div class="t" style="left:871px;top:105.5px;font-size:14px;color:#2e3436">px</div><svg style="left:894px;top:111px" width="11" height="6" viewBox="0 0 11 6"><path d="M0,0 L10,0 L5,5 Z" fill="#2e3436"/></svg><div class="a" style="left:916px;top:102px;width:1px;height:21px;background:#cfcfcc"></div><div class="a" style="left:924px;top:97px;width:32px;height:32px;border:1px solid #a9a9a6;border-radius:4px;background:linear-gradient(#d3d3d0,#dadad7)"></div><div class="a" style="left:958px;top:97px;width:32px;height:32px;border:1px solid #a9a9a6;border-radius:4px;background:linear-gradient(#d3d3d0,#dadad7)"></div><div class="a" style="left:992px;top:97px;width:32px;height:32px;border:1px solid #a9a9a6;border-radius:4px;background:linear-gradient(#d3d3d0,#dadad7)"></div><div class="a" style="left:1026px;top:97px;width:32px;height:32px;border:1px solid #a9a9a6;border-radius:4px;background:linear-gradient(#d3d3d0,#dadad7)"></div><svg style="left:933px;top:106px" width="14" height="13" viewBox="0 0 14 13"><path d="M0,1.5 H12 V6.5" fill="none" stroke="#111" stroke-width="1.8"/><path d="M0,5.5 H9 V8" fill="none" stroke="#111" stroke-width="1.2"/><path d="M2,10.5 H9" stroke="#111" stroke-width="1" stroke-dasharray="1.5,1"/><path d="M9,8 L12.5,10.5 L9,13 Z" fill="#111"/></svg><svg style="left:967px;top:106px" width="14" height="13" viewBox="0 0 14 13"><path d="M0,1.2 H6 Q11.5,1.2 11.5,6.5" fill="none" stroke="#111" stroke-width="1.4"/><path d="M0,4.8 H5.5 Q8.3,4.8 8.3,7.5" fill="none" stroke="#111" stroke-width="1.1"/><path d="M2,10.5 H9" stroke="#111" stroke-width="1" stroke-dasharray="1.5,1"/><path d="M9,8 L12.5,10.5 L9,13 Z" fill="#111"/></svg><svg style="left:1001px;top:106px" width="14" height="13" viewBox="0 0 14 13"><rect x="0" y="2.5" width="10.5" height="3" fill="#9cc0e8"/><path d="M0,1.5 H12 V6.5" fill="none" stroke="#111" stroke-width="1.8"/><path d="M0,5.5 H9 V8" fill="none" stroke="#111" stroke-width="1.2"/><path d="M2,10.5 H9" stroke="#111" stroke-width="1" stroke-dasharray="1.5,1"/><path d="M9,8 L12.5,10.5 L9,13 Z" fill="#111"/></svg><svg style="left:1035px;top:106px" width="14" height="13" viewBox="0 0 14 13"><path d="M0,1.2 H12.5 M0,6 H12.5 V7.5" fill="none" stroke="#111" stroke-width="1.6"/><path d="M1.3,3.6 L2.8,2.2 L4.3,3.6 L2.8,5 Z M5,3.6 L6.5,2.2 L8,3.6 L6.5,5 Z M8.7,3.6 L10.2,2.2 L11.7,3.6 L10.2,5Z" fill="#111"/><path d="M2,10.5 H9" stroke="#111" stroke-width="1" stroke-dasharray="1.5,1"/><path d="M9,8 L12.5,10.5 L9,13 Z" fill="#111"/></svg><!--/TOOLCTL-->
<!--TOPICONS--><svg style="left:96px;top:5px" width="14" height="13" viewBox="0 0 14 13"><defs><linearGradient id="ikg" x1="0" y1="0" x2="1" y2="0.3"><stop offset="0.2" stop-color="#ffffff"/><stop offset="0.6" stop-color="#c0c8d8"/><stop offset="1" stop-color="#3a62a0"/></linearGradient></defs><path d="M1,8 L6.8,0.8 L12.5,7.8 Q9,9 7,6 Q4,8 1,8 Z" fill="url(#ikg)"/><path d="M2,9 Q6,11.5 11,10" stroke="#555" stroke-width="1" fill="none"/><path d="M4,7 Q6,5 8,7 Q6,9 4,7Z" fill="#000"/></svg><svg style="left:181px;top:11px" width="10" height="6" viewBox="0 0 10 6"><path d="M0,0 L10,0 L5,5.5 Z" fill="#dcdcdc"/></svg><svg style="left:1259px;top:6px" width="15" height="15" viewBox="0 0 15 15"><path d="M1,5.5 Q7.5,-0.5 14,5.5" stroke="#ddd" stroke-width="1.6" fill="none"/><path d="M3.5,8.3 Q7.5,4.5 11.5,8.3" stroke="#ddd" stroke-width="1.6" fill="none"/><path d="M5.5,10.8 Q7.5,9 9.5,10.8" stroke="#ddd" stroke-width="1.6" fill="none"/><circle cx="7.5" cy="12.5" r="1.6" fill="#ddd"/></svg><svg style="left:1286px;top:6px" width="18" height="16" viewBox="0 0 18 16"><path d="M0.5,5 H3.5 L7,1 V12 L3.5,8 H0.5 Z" fill="#ccc"/><path d="M8.5,4 Q10,6.5 8.5,9 M10.5,2.5 Q13,6.5 10.5,10.5 M12.5,1 Q16,6.5 12.5,12" stroke="#888" stroke-width="1" fill="none"/><path d="M11,11 L15,15 M15,11 L11,15" stroke="#ddd" stroke-width="1.5"/></svg><svg style="left:1317px;top:5px" width="13" height="17" viewBox="0 0 13 17"><path d="M3.5,0.5 H9.5 V2.5 H12.3 V16.3 H0.7 V2.5 H3.5 Z" fill="none" stroke="#ddd" stroke-width="1.2"/><rect x="3" y="8" width="7" height="2" fill="#ddd"/><rect x="3" y="11.5" width="7" height="2" fill="#ddd"/></svg><svg style="left:1341px;top:11px" width="10" height="6" viewBox="0 0 10 6"><path d="M0,0 L10,0 L5,5.5 Z" fill="#dcdcdc"/></svg><svg style="left:1343px;top:40px" width="10" height="10" viewBox="0 0 10 10"><path d="M1,1 L9,9 M9,1 L1,9" stroke="#2e3436" stroke-width="2.2"/></svg><!--/TOPICONS-->
<!--STATUS--><div class="t" style="left:2px;top:737px;font-size:11.5px">Fill:</div><div class="t" style="left:2px;top:753.2px;font-size:11.5px">Stroke:</div><div class="t" style="left:72px;top:737px;font-size:11.5px">N/A</div><div class="t" style="left:72px;top:753.2px;font-size:11.5px">N/A</div><div class="t" style="left:126px;top:744.5px;font-size:12px">O:</div><div class="a" style="left:141px;top:736px;width:46px;height:31px;background:#f4f4f2;border:1px solid #8f8f8b;border-radius:3px"></div><div class="a" style="left:173px;top:737px;width:1px;height:29px;background:#d6d6d3"></div><div class="a" style="left:174px;top:751px;width:12px;height:1px;background:#d6d6d3"></div><svg style="left:0;top:0" width="1366" height="768"><path d="M176.0,746.2 L185.0,746.2 L180.5,741.8 Z M176.0,756.8 L185.0,756.8 L180.5,761.2 Z" fill="#7c7f80"/></svg><div class="a" style="left:142px;top:737px;width:25.5px;height:29px;overflow:hidden"><div class="t" style="left:9.5px;top:8.5px;font-size:12.2px;color:#8b8e8f">100</div></div><div class="a" style="left:190px;top:736px;width:1px;height:32px;background:#d0d0cd"></div><svg style="left:196px;top:745px" width="13" height="11" viewBox="0 0 13 11"><path d="M0.5,5.5 Q6.5,-1 12.5,5.5 Q6.5,11 0.5,5.5 Z" fill="#fff" stroke="#111" stroke-width="1.3"/><circle cx="6.5" cy="5.5" r="2.6" fill="#111"/><path d="M2,1.5 L3,3 M6.5,0 V2 M11,1.5 L10,3" stroke="#111" stroke-width="1"/></svg><svg style="left:219px;top:744px" width="12" height="14" viewBox="0 0 12 14"><path d="M3.3,2.3 H8.5 V6.5" fill="none" stroke="#222" stroke-width="1.1"/><path d="M2,6.5 L9.8,6 L10.5,11.5 L2.5,12.5 Z" fill="#f4e070" stroke="#111" stroke-width="1.1" stroke-linejoin="round"/><path d="M5.5,8.3 L7,8.2 L6.5,10 Z" fill="#111"/></svg><div class="a" style="left:237px;top:736px;width:90px;height:31px;border:1px solid #a8a8a5;border-radius:4px;background:linear-gradient(#eaeae9,#dededc)"></div><div class="t" style="left:247px;top:745.5px;font-size:12.8px;color:#2e3436">•Layer 1</div><svg style="left:304px;top:748px" width="12" height="7" viewBox="0 0 12 7"><path d="M0.5,0.5 L11,0.5 L5.75,6 Z" fill="#2e3436"/></svg><div class="t" style="left:333.5px;top:743.8px;font-size:14.6px;color:#2e3436">No objects selected. Click, Shift+click, Alt+scroll mouse on top of objects, or drag around objects to select.</div><div class="a" style="left:1205px;top:736px;width:1px;height:32px;background:#d0d0cd"></div><div class="t" style="left:1208px;top:737px;font-size:11.8px">X:</div><div class="t" style="left:1221px;top:737px;font-size:11.8px;letter-spacing:1.3px">-574.29</div><div class="t" style="left:1208px;top:752.7px;font-size:11.8px">Y:</div><div class="t" style="left:1221px;top:752.7px;font-size:11.8px;letter-spacing:1.3px">-182.86</div><div class="t" style="left:1278px;top:744.5px;font-size:12.2px">Z:</div><div class="a" style="left:1291px;top:736px;width:55px;height:31px;background:#fff;border:1px solid #9c9c99;border-radius:4px"></div><div class="a" style="left:1331px;top:737px;width:1px;height:29px;background:#e4e4e2"></div><div class="a" style="left:1332px;top:751px;width:13px;height:1px;background:#e4e4e2"></div><svg style="left:1334px;top:741px" width="10" height="21" viewBox="0 0 10 21"><path d="M0,4.5 L9,4.5 L4.5,0.5 Z M0,16 L9,16 L4.5,20.2 Z" fill="#2e3436"/></svg><div class="t" style="left:1306.5px;top:744.5px;font-size:12.2px;letter-spacing:-0.9px;color:#2e3436">35%</div><!--/STATUS-->
<!--LEFTTB--><div class="a" style="left:5px;top:139px;width:28px;height:28px;border:1px solid #a9a9a6;border-radius:4px;background:linear-gradient(#d3d3d0,#dadad7)"></div><svg style="left:10px;top:141px" width="17" height="24" viewBox="0 0 17 24"><path d="M2.5,2 L13.5,14 L8.8,14.3 L11.5,20 L9,21.5 L6.3,15.8 L3,19 Z" fill="#000" stroke="#fff" stroke-width="1.2" stroke-linejoin="round"/></svg><svg style="left:6px;top:170px" width="26" height="26" viewBox="0 0 26 26"><path d="M10,6 Q13,2.5 21,2.5" stroke="#555" stroke-width="1" fill="none"/><path d="M5,10 Q2.5,13 3.5,20" stroke="#555" stroke-width="1" fill="none"/><rect x="4.5" y="4.5" width="6.3" height="6.3" fill="#8f8ff0" stroke="#0000ff" stroke-width="1.4"/><rect x="20" y="2.2" width="3.6" height="3.6" fill="#aab" stroke="#33f" stroke-width="0.9"/><rect x="2.2" y="20.2" width="3.6" height="3.6" fill="#aab" stroke="#33f" stroke-width="0.9"/><path d="M10,10 L22,17.8 L16.7,22.5 Z" fill="#000"/></svg><svg style="left:8px;top:201px" width="22" height="23" viewBox="0 0 22 23"><defs><linearGradient id="tw" x1="0" y1="0" x2="0" y2="1"><stop offset="0" stop-color="#5a5a5a"/><stop offset="1" stop-color="#d8d8d8"/></linearGradient></defs><path d="M1,11 Q6,11 8,6.5 Q10.5,1.5 15,1.5 Q20.5,1.5 20.5,6.5 Q20,10.5 16.5,10 Q14,9.5 14.5,7 Q12,7.5 12,10 Q12.5,12 21,12 V22 H1 Z" fill="url(#tw)"/><path d="M0.5,11 Q6,11 8,6.5 Q10.5,1.5 15,1.5 Q20.5,1.5 20.5,6.5 Q20,10.5 16.5,10 Q14,9.5 14.5,7" fill="none" stroke="#111" stroke-width="2.6"/><path d="M0.5,11 Q6,11 8,6.5 Q10.5,1.5 15,1.5 Q20.5,1.5 20.5,6.5 Q20,10.5 16.5,10 Q14,9.5 14.5,7" fill="none" stroke="#fff" stroke-width="0.9"/><path d="M12,10.5 Q13,12 21,12" fill="none" stroke="#111" stroke-width="1.6"/></svg><svg style="left:7px;top:231px" width="24" height="24" viewBox="0 0 24 24"><defs><linearGradient id="zg" x1="0" y1="0" x2="1" y2="1"><stop offset="0" stop-color="#f4f8fc"/><stop offset="1" stop-color="#a8c4e4"/></linearGradient></defs><path d="M13.5,13.5 L20.5,20.5" stroke="#222" stroke-width="5.2" stroke-linecap="round"/><path d="M14.8,14.8 L20.3,20.3" stroke="#f4b400" stroke-width="2.8" stroke-linecap="round"/><circle cx="8.3" cy="8" r="7" fill="url(#zg)" stroke="#111" stroke-width="1.5"/><path d="M4,7.5 Q4.5,4 8,3.5" stroke="#fff" stroke-width="1.4" fill="none"/></svg><svg style="left:7px;top:262px" width="21" height="22" viewBox="0 0 21 22"><defs><linearGradient id="mg" x1="0" y1="0" x2="1" y2="1"><stop offset="0" stop-color="#fbe4d8"/><stop offset="1" stop-color="#f0a890"/></linearGradient></defs><path d="M1.5,5 L8,0.8 L19.5,16.5 L13,20.8 Z" fill="url(#mg)" stroke="#111" stroke-width="1.4" stroke-linejoin="round"/><path d="M3.3,6.5 L5.5,5 M4.5,8.2 L5.8,7.3 M5.7,9.9 L7.9,8.4 M6.9,11.6 L8.2,10.7 M8.1,13.3 L10.3,11.8 M9.3,15 L10.6,14.1 M10.5,16.7 L12.7,15.2" stroke="#222" stroke-width="0.9"/></svg><svg style="left:9px;top:293px" width="20" height="20" viewBox="0 0 20 20"><defs><linearGradient id="rg" x1="0" y1="0" x2="1" y2="1"><stop offset="0" stop-color="#f4f8fc"/><stop offset="1" stop-color="#7d9fc8"/></linearGradient></defs><rect x="0.8" y="0.8" width="18.4" height="18.4" fill="url(#rg)" stroke="#000" stroke-width="1.6"/></svg><svg style="left:8px;top:321px" width="22" height="23" viewBox="0 0 22 23"><path d="M1,5.5 L10,1 L21,5.5 L21,17 L12,22 L1,17 Z" fill="#9a9ae0" stroke="#444" stroke-width="1.1" stroke-linejoin="round"/><path d="M10,2 L20,6 L20,16 L11,13 Z" fill="#e4e4fb"/><path d="M2,17 L11,13 L20,16.5 L12,21 Z" fill="#3c3c90"/><path d="M2,6 L10,2 L11,13 L2,17Z" fill="#8888d0"/></svg><svg style="left:9px;top:353px" width="20" height="20" viewBox="0 0 20 20"><defs><linearGradient id="cg" x1="0" y1="0" x2="0" y2="1"><stop offset="0" stop-color="#ffeaea"/><stop offset="1" stop-color="#ff9aaa"/></linearGradient></defs><circle cx="10" cy="10" r="9.2" fill="url(#cg)" stroke="#111" stroke-width="1.4"/></svg><svg style="left:7px;top:382px" width="24" height="23" viewBox="0 0 24 23"><path d="M1.5,8 L7,1.5 L13,4 L12.5,13 L4,15 Z" fill="#f6f0a8" stroke="#333" stroke-width="1.1" stroke-linejoin="round"/><path d="M15,6.5 L17.3,11.5 L22.5,12 L18.5,15.5 L19.8,21 L15,18.2 L10.2,21 L11.5,15.5 L7.5,12 L12.7,11.5 Z" fill="#f6e060" stroke="#333" stroke-width="1.1" stroke-linejoin="round"/></svg><svg style="left:7px;top:411px" width="24" height="24" viewBox="0 0 24 24"><path d="M12.5,12.5 Q10.5,13.5 10.5,11 Q11,8.5 13.5,9 Q16.5,10 16,13 Q15,16.5 11.5,16.5 Q6.5,16 6.5,11 Q7,5 13,5 Q20,5.5 20.5,12.5 Q20.5,20 13,21.5 Q4,22 2.5,13 Q2,3.5 11.5,1.5 Q21,1 22.5,10 Q23,16 21.5,21" fill="none" stroke="#111" stroke-width="1.4"/></svg><svg style="left:7px;top:441px" width="24" height="24" viewBox="0 0 24 24"><path d="M1,2 H6 L1.5,10.5 Q5,8 7,12 Q6,17 9.5,21 Q14,23 20,20" fill="none" stroke="#111" stroke-width="1.1"/><path d="M11,10 L16.5,2 L22,5 L17,14 Z" fill="#f5b800" stroke="#333" stroke-width="0.8"/><path d="M11,10 L17,14 L12,19 Z" fill="#fff4d0" stroke="#333" stroke-width="0.8"/><path d="M12,16.5 L13.5,17.5 L12,19Z" fill="#000"/></svg><svg style="left:8px;top:471px" width="23" height="24" viewBox="0 0 23 24"><path d="M1,1.5 H11 M2,1.5 Q9,8 9.5,15 Q9.5,20 6,21 H1 V23 H10" fill="none" stroke="#111" stroke-width="1.2"/><path d="M16,1 Q22,1 22,7 L19,13 L14,11 L14.5,4 Z" fill="#6aa0d0" stroke="#333" stroke-width="0.8"/><path d="M14,11 L19,13 L17.5,15 L13.5,14 Z" fill="#f0c040" stroke="#333" stroke-width="0.6"/><path d="M14,14 L17,15 L13,22 L11.5,21.5Z" fill="#555"/></svg><svg style="left:8px;top:501px" width="23" height="23" viewBox="0 0 23 23"><path d="M6,0.5 Q0.5,3 0.8,10 Q1.2,17 7,21.5 Q8.5,22.5 8,20.5 Q4.5,15 5,9.5 Q5.5,4 8.5,1.5 Q8,0 6,0.5 Z" fill="#111"/><path d="M9.5,21 Q13,18 16.5,18.5 Q19.5,19 22,19.5" fill="none" stroke="#111" stroke-width="1.4"/><path d="M14,1 L22,4 L20.5,8 L12.5,5 Z" fill="#5a9ad0" stroke="#333" stroke-width="0.6"/><path d="M12.5,5 L20.5,8 L19.8,9.8 L11.8,6.8 Z" fill="#d02020"/><path d="M11.8,6.8 L19.8,9.8 L17,15 L10,19 L9,11 Z" fill="#f2c850" stroke="#222" stroke-width="0.9" stroke-linejoin="round"/><path d="M10,19 L13,13 M13,13 L14.5,12" stroke="#222" stroke-width="0.8"/><circle cx="14" cy="12.5" r="1" fill="#222"/></svg><svg style="left:8px;top:532px" width="20" height="22" viewBox="0 0 20 22"><path d="M7,0.8 H13 L19.8,21.2 H14.3 L13,17 H7 L5.7,21.2 H0.2 Z M8.3,12.8 H11.7 L10,6.8 Z" fill="#161616"/><path d="M7.5,1.5 H12.5" stroke="#555" stroke-width="0.8"/></svg><svg style="left:26px;top:532px" width="6" height="23" viewBox="0 0 6 23"><path d="M0.5,0.5 H4.5 M2.5,0.5 V21.5 M0.5,21.5 H4.5" stroke="#111" stroke-width="1"/></svg><svg style="left:8px;top:562px" width="23" height="22" viewBox="0 0 23 22"><circle cx="2.5" cy="1.5" r="1.2" fill="#111"/><circle cx="1.3" cy="5" r="1.2" fill="#111"/><circle cx="3" cy="9" r="1.2" fill="#111"/><circle cx="6" cy="3.5" r="0.9" fill="#333"/><circle cx="7" cy="7" r="0.9" fill="#333"/><circle cx="9.5" cy="5" r="0.8" fill="#555"/><path d="M12,4 Q12,2 15,2 Q18,2 18,4 V6 H12 Z" fill="#fff" stroke="#222" stroke-width="1"/><path d="M11,6 H19 V8 H11Z" fill="#e8a020"/><path d="M10.5,8 H19.5 Q21.5,15 20.5,21 H12 Q9.5,15 10.5,8 Z" fill="#5cb030" stroke="#222" stroke-width="1"/></svg><svg style="left:9px;top:591px" width="20" height="23" viewBox="0 0 20 23"><defs><linearGradient id="eg" x1="0" y1="0" x2="0.3" y2="1"><stop offset="0" stop-color="#fdf0ea"/><stop offset="1" stop-color="#f0b09a"/></linearGradient></defs><path d="M1,14.5 L10,1 L19,6.5 L10,21.5 Z" fill="url(#eg)" stroke="#111" stroke-width="1.3" stroke-linejoin="round"/></svg><svg style="left:7px;top:621px" width="23" height="23" viewBox="0 0 23 23"><defs><linearGradient id="bg2" x1="0" y1="0" x2="0" y2="1"><stop offset="0" stop-color="#a8d0e8"/><stop offset="1" stop-color="#3a78a8"/></linearGradient><linearGradient id="pg" x1="0" y1="0" x2="0" y2="1"><stop offset="0" stop-color="#c8f0c8"/><stop offset="1" stop-color="#60b860"/></linearGradient></defs><ellipse cx="11" cy="20.5" rx="9.5" ry="1.8" fill="url(#pg)" stroke="#2a6a2a" stroke-width="0.7"/><path d="M4,9 Q3,15 9,20" stroke="#60c060" stroke-width="2.2" fill="none"/><path d="M3.5,7.5 L15.5,1.5 L21,11 L9.5,16.5 Z" fill="url(#bg2)" stroke="#223" stroke-width="1" stroke-linejoin="round"/><ellipse cx="6.5" cy="12" rx="2.8" ry="4.5" transform="rotate(-28 6.5 12)" fill="#7cd07c" stroke="#223" stroke-width="0.9"/><path d="M5,0.8 V8 M3.5,0.8 H6.5" stroke="#333" stroke-width="1"/><circle cx="11.5" cy="8.5" r="1" fill="#333"/></svg><svg style="left:16px;top:670px" width="7" height="10" viewBox="0 0 7 10"><path d="M1,0 L6,5 L1,10 Z" fill="#2e3436"/></svg><!--/LEFTTB-->
<!--RIGHTTB--><svg style="left:1293px;top:143px" width="22" height="23" viewBox="0 0 22 23"><path d="M1.5,2 Q1.5,1 2.5,1 L13,1 L18,6 L18,21 Q18,22 17,22 L2.5,22 Q1.5,22 1.5,21 Z" fill="#f4f4f2" stroke="#999" stroke-width="1"/><path d="M15.5,1 L17.2,4.3 L20.8,4.8 L18.2,7.3 L18.8,10.9 L15.5,9.2 L12.2,10.9 L12.8,7.3 L10.2,4.8 L13.8,4.3 Z" fill="#fff080" stroke="#e8c000" stroke-width="1.3" stroke-linejoin="round"/></svg><svg style="left:1292px;top:179px" width="23" height="20" viewBox="0 0 23 20"><path d="M2,3 Q2,1 4,1 L9,1 L11,3 L19,3 Q20,3 20,5 L20,12 L2,12 Z" fill="#8a6a48" stroke="#5a4028" stroke-width="0.8"/><rect x="5" y="6" width="12" height="8" fill="#f4f4f4" stroke="#888" stroke-width="0.8"/><path d="M7,8.5 H15 M7,10.5 H15" stroke="#999" stroke-width="0.8"/><path d="M0.5,12 L22,12 L20,19 L2.5,19 Z" fill="#c8a880" stroke="#6a5038" stroke-width="0.8"/></svg><svg style="left:1294px;top:212px" width="20" height="23" viewBox="0 0 20 23"><rect x="1" y="1" width="18" height="21" rx="2" fill="#e0e0de" stroke="#888" stroke-width="0.9"/><rect x="3" y="14" width="14" height="7" fill="#f6f6f6" stroke="#777" stroke-width="0.8"/><path d="M6,16 V18 H14 V16" stroke="#555" stroke-width="1" fill="none"/><path d="M7.5,1 H12.5 V7 H16 L10,13.5 L4,7 H7.5 Z" fill="#50c030" stroke="#2a8010" stroke-width="0.8"/></svg><svg style="left:1292px;top:248px" width="23" height="20" viewBox="0 0 23 20"><rect x="3" y="1" width="17" height="5" fill="#d8d8d8" stroke="#444" stroke-width="0.8"/><path d="M5,3.5 H13" stroke="#222" stroke-width="1" stroke-dasharray="1,1"/><rect x="0.8" y="5" width="21.4" height="10" rx="1.5" fill="#555" stroke="#222" stroke-width="0.8"/><rect x="2" y="6" width="19" height="3" fill="#eee"/><rect x="4" y="10" width="15" height="9" fill="#fafafa" stroke="#333" stroke-width="0.8"/><path d="M8,12 L16,16" stroke="#7ac070" stroke-width="1.5"/><rect x="0.8" y="16" width="21.4" height="3" fill="#333"/></svg><div class="a" style="left:1292px;top:279px;width:21px;height:1px;background:#cfcfcc"></div><svg style="left:1292px;top:293px" width="22" height="20" viewBox="0 0 22 20"><path d="M7,1 L15,1 L20,6 L20,19 L7,19 Z" fill="#f4f4f2" stroke="#333" stroke-width="0.9"/><path d="M15,1 V6 H20" fill="none" stroke="#333" stroke-width="0.8"/><path d="M0,10 H10" stroke="#000" stroke-width="1.3"/><path d="M9,7 L13,10 L9,13 Z" fill="#000"/></svg><svg style="left:1292px;top:327px" width="22" height="20" viewBox="0 0 22 20"><path d="M1.5,1 L9.5,1 L14.5,6 L14.5,19 L1.5,19 Z" fill="#f4f4f2" stroke="#333" stroke-width="0.9"/><path d="M9.5,1 V6 H14.5" fill="none" stroke="#333" stroke-width="0.8"/><path d="M8,11 H17" stroke="#000" stroke-width="1.3"/><path d="M16,8 L20.5,11 L16,14 Z" fill="#000"/></svg><div class="a" style="left:1292px;top:359px;width:21px;height:1px;background:#cfcfcc"></div><svg style="left:1292px;top:373px" width="23" height="19" viewBox="0 0 23 19"><path d="M1,6.5 L8,1 L8,4 L13,4 Q21,4.5 21,11 Q20.5,17 14,18 L11,18 L11,14 L13.5,14 Q16.5,13.5 16.5,11 Q16.5,8.5 13,8.5 L8,8.5 L8,12 Z" fill="#f8e060" stroke="#c8a000" stroke-width="1" stroke-linejoin="round"/></svg><svg style="left:1292px;top:407px" width="23" height="19" viewBox="0 0 23 19"><path d="M22,6.5 L15,1 L15,4 L10,4 Q2,4.5 2,11 Q2.5,17 9,18 L12,18 L12,14 L9.5,14 Q6.5,13.5 6.5,11 Q6.5,8.5 10,8.5 L15,8.5 L15,12 Z" fill="url(#chkg)" stroke="none"/></svg><div class="a" style="left:1292px;top:439px;width:21px;height:1px;background:#cfcfcc"></div><svg style="left:1292px;top:452px" width="22" height="22" viewBox="0 0 22 22"><rect x="1.5" y="1.5" width="11" height="12" fill="#f8f8f8" stroke="#777" stroke-width="0.9"/><path d="M3.5,4.5 H10.5 M3.5,6.5 H10.5 M3.5,8.5 H9" stroke="#888" stroke-width="0.8"/><rect x="8.5" y="8.5" width="11" height="12" fill="#f8f8f8" stroke="#777" stroke-width="0.9"/><path d="M10.5,11.5 H17.5 M10.5,13.5 H17.5 M10.5,15.5 H17.5 M10.5,17.5 H15" stroke="#888" stroke-width="0.8"/></svg><svg style="left:1293px;top:485px" width="20" height="23" viewBox="0 0 20 23"><path d="M4.5,1 L12.5,15 L10.5,15.5 Z" fill="#f4f4f4" stroke="#888" stroke-width="0.9" stroke-linejoin="round"/><path d="M15.5,1 L7.5,15 L9.5,15.5 Z" fill="#f4f4f4" stroke="#888" stroke-width="0.9" stroke-linejoin="round"/><circle cx="5.5" cy="17.5" r="3.6" fill="#fff" stroke="#d01010" stroke-width="2.3"/><circle cx="14.5" cy="17.5" r="3.6" fill="#fff" stroke="#d01010" stroke-width="2.3"/><circle cx="10" cy="13.5" r="0.8" fill="#555"/></svg><svg style="left:1293px;top:519px" width="22" height="23" viewBox="0 0 22 23"><rect x="1" y="3" width="15" height="18" rx="2" fill="#e0b070" stroke="#a07030" stroke-width="0.9"/><rect x="5" y="1" width="7" height="4" rx="1" fill="#eee" stroke="#666" stroke-width="0.8"/><rect x="9" y="9" width="11" height="12" fill="#f8f8f8" stroke="#666" stroke-width="0.9"/><path d="M11,12 H18 M11,14 H18 M11,16 H18 M11,18 H16" stroke="#888" stroke-width="0.8"/></svg><div class="a" style="left:1292px;top:553px;width:21px;height:1px;background:#cfcfcc"></div><svg style="left:1293px;top:567px" width="20" height="19" viewBox="0 0 20 19"><path d="M12,12 L17.5,17.5" stroke="#111" stroke-width="2.8" stroke-linecap="round"/><circle cx="8.5" cy="8.5" r="7.3" fill="#d8e6f4" stroke="#111" stroke-width="1.5"/><rect x="4.5" y="5" width="8" height="7" fill="#fff" stroke="#333" stroke-width="0.8" stroke-dasharray="1,1"/></svg><svg style="left:1293px;top:601px" width="20" height="19" viewBox="0 0 20 19"><path d="M12,12 L17.5,17.5" stroke="#111" stroke-width="2.8" stroke-linecap="round"/><circle cx="8.5" cy="8.5" r="7.3" fill="#d8e6f4" stroke="#111" stroke-width="1.5"/><rect x="3.5" y="4" width="6" height="6" fill="#f0d060" stroke="#444" stroke-width="0.8"/><rect x="6.5" y="7" width="6" height="6" fill="#f0c040" stroke="#444" stroke-width="0.8"/></svg><svg style="left:1293px;top:635px" width="20" height="19" viewBox="0 0 20 19"><path d="M12,12 L17.5,17.5" stroke="#111" stroke-width="2.8" stroke-linecap="round"/><circle cx="8.5" cy="8.5" r="7.3" fill="#d8e6f4" stroke="#111" stroke-width="1.5"/><rect x="5.5" y="4" width="6.5" height="9" fill="#f4f4f4" stroke="#333" stroke-width="0.9"/></svg><svg style="left:1301px;top:670px" width="7" height="10" viewBox="0 0 7 10"><path d="M1,0 L6,5 L1,10 Z" fill="#2e3436"/></svg><div class="a" style="left:1329px;top:139px;width:32px;height:32px;border:1px solid #a9a9a6;border-radius:4px;background:linear-gradient(#d3d3d0,#dadad7)"></div><svg style="left:1335px;top:145px" width="20" height="20" viewBox="0 0 20 20"><path d="M3.5,3.5 L11.5,11.5" stroke="#000" stroke-width="1.5"/><path d="M13,13 L7.5,11.5 L11.5,7.5 Z" fill="#000"/><path d="M3.5,0.6 L6.4,3.5 L3.5,6.4 L0.6,3.5 Z" fill="#b8b8f0" stroke="#0000ff" stroke-width="1.2"/><path d="M15,11.9 L18.1,15 L15,18.1 L11.9,15 Z" fill="#b8b8e0" stroke="#108010" stroke-width="1.2"/></svg><div class="a" style="left:1334px;top:177px;width:20px;height:1px;background:#cfcfcc"></div><svg style="left:1335px;top:191px" width="20" height="20" viewBox="0 0 20 20"><path d="M3.5,3.5 L11.5,11.5" stroke="#000" stroke-width="1.5"/><path d="M13,13 L7.5,11.5 L11.5,7.5 Z" fill="#000"/><path d="M3.5,0.6 L6.4,3.5 L3.5,6.4 L0.6,3.5 Z" fill="#b8b8f0" stroke="#0000ff" stroke-width="1.2"/><path d="M15,11.9 L18.1,15 L15,18.1 L11.9,15 Z" fill="#b8b8e0" stroke="#108010" stroke-width="1.2"/></svg><svg style="left:1336px;top:226px" width="20" height="18" viewBox="0 0 20 18"><path d="M2,15.5 H15.5 V1" stroke="#2a6a2a" stroke-width="1.2" stroke-dasharray="1.2,1" fill="none"/></svg><svg style="left:1336px;top:260px" width="20" height="19" viewBox="0 0 20 19"><path d="M1,15.5 H14.5 V1" stroke="#2a6a2a" stroke-width="1.2" stroke-dasharray="1.2,1" fill="none"/><path d="M14.5,12.5 L17.5,15.5 L14.5,18.5 L11.5,15.5Z" fill="#9a9" stroke="#2a4a2a" stroke-width="0.8"/></svg><svg style="left:1336px;top:294px" width="20" height="18" viewBox="0 0 20 18"><path d="M1,15.5 H14.5 V4" stroke="#222" stroke-width="1" stroke-dasharray="1.2,1" fill="none"/><path d="M14.5,1 L17,4 L14.5,7 L12,4Z" fill="#9a9" stroke="#2a4a2a" stroke-width="0.8"/></svg><svg style="left:1336px;top:328px" width="20" height="18" viewBox="0 0 20 18"><path d="M2,15.5 H14.5 V2" stroke="#222" stroke-width="1" stroke-dasharray="1.2,1" fill="none"/><circle cx="5" cy="5" r="1.8" fill="#9a9" stroke="#2a5a2a" stroke-width="0.9"/></svg><div class="a" style="left:1334px;top:359px;width:20px;height:1px;background:#cfcfcc"></div><div class="a" style="left:1329px;top:367px;width:32px;height:32px;border:1px solid #a9a9a6;border-radius:4px;background:linear-gradient(#d3d3d0,#dadad7)"></div><svg style="left:1335px;top:373px" width="20" height="20" viewBox="0 0 20 20"><path d="M3.5,3.5 L11.5,11.5" stroke="#000" stroke-width="1.5"/><path d="M13,13 L7.5,11.5 L11.5,7.5 Z" fill="#000"/><path d="M3.5,0.6 L6.4,3.5 L3.5,6.4 L0.6,3.5 Z" fill="#b8b8f0" stroke="#0000ff" stroke-width="1.2"/><path d="M15,11.9 L18.1,15 L15,18.1 L11.9,15 Z" fill="#b8b8e0" stroke="#108010" stroke-width="1.2"/></svg><svg style="left:1335px;top:407px" width="20" height="19" viewBox="0 0 20 19"><path d="M2,2 Q11,3 13,11 Q14,17 11,17 Q15,17 18,13" fill="none" stroke="#108010" stroke-width="1.5"/></svg><svg style="left:1335px;top:441px" width="20" height="19" viewBox="0 0 20 19"><path d="M1,17 L19,1 M2,10 L18,8" stroke="#555" stroke-width="1"/><circle cx="10" cy="9" r="2.3" fill="#9a9" stroke="#108010" stroke-width="1.2"/></svg><svg style="left:1335px;top:475px" width="20" height="19" viewBox="0 0 20 19"><path d="M2,2 Q12,3 10,13 M10,13 Q16,12 18,8" fill="none" stroke="#555" stroke-width="1.1"/><path d="M10,9.5 L13,12.5 L10,15.5 L7,12.5Z" fill="#aab" stroke="#108010" stroke-width="1.1"/></svg><svg style="left:1335px;top:509px" width="20" height="17" viewBox="0 0 20 17"><path d="M2,2 Q8,2 9,5 Q11,12 8,15 Q14,14 18,10" fill="none" stroke="#555" stroke-width="1.1"/><rect x="7" y="2.5" width="4" height="4" fill="#9a9" stroke="#108010" stroke-width="1.1"/></svg><svg style="left:1335px;top:543px" width="20" height="20" viewBox="0 0 20 20"><path d="M1,18 L19,2" stroke="#444" stroke-width="1"/><path d="M3,13 L6,19 M6,11 L9,17 M12,4 L15,10 M15,2 L18,8" stroke="#d02020" stroke-width="1.2"/><circle cx="10" cy="10" r="2.3" fill="#9a9" stroke="#108010" stroke-width="1.2"/></svg><div class="a" style="left:1334px;top:575px;width:20px;height:1px;background:#cfcfcc"></div><div class="a" style="left:1329px;top:583px;width:32px;height:32px;border:1px solid #a9a9a6;border-radius:4px;background:linear-gradient(#d3d3d0,#dadad7)"></div><svg style="left:1335px;top:589px" width="20" height="20" viewBox="0 0 20 20"><path d="M3.5,3.5 L11.5,11.5" stroke="#000" stroke-width="1.5"/><path d="M13,13 L7.5,11.5 L11.5,7.5 Z" fill="#000"/><path d="M3.5,0.6 L6.4,3.5 L3.5,6.4 L0.6,3.5 Z" fill="#b8b8f0" stroke="#0000ff" stroke-width="1.2"/><path d="M15,11.9 L18.1,15 L15,18.1 L11.9,15 Z" fill="#b8b8e0" stroke="#108010" stroke-width="1.2"/></svg><svg style="left:1335px;top:623px" width="20" height="16" viewBox="0 0 20 16"><path d="M1.5,15 H15 V1" stroke="#777" stroke-width="1.1" fill="none"/><circle cx="7" cy="6.5" r="1.8" fill="#dde" stroke="#108010" stroke-width="1.1"/></svg><svg style="left:1343px;top:670px" width="7" height="10" viewBox="0 0 7 10"><path d="M1,0 L6,5 L1,10 Z" fill="#2e3436"/></svg><svg style="left:1254px;top:140px" width="12" height="11" viewBox="0 0 12 11"><path d="M4,1.5 H7 V8.5 H9 V10 H3 V8.5 H5 V3.5 L3,4.5 V3 Z" fill="#f4f4f4" stroke="#777" stroke-width="0.8"/></svg><svg style="left:1257px;top:689px" width="8" height="8" viewBox="0 0 8 8"><rect x="0" y="0" width="1" height="1" fill="#3a3"/><rect x="2" y="0" width="1" height="1" fill="#3a3"/><rect x="1" y="1" width="1" height="1" fill="#3a3"/><rect x="3" y="1" width="1" height="1" fill="#8b3"/><rect x="0" y="2" width="1" height="1" fill="#3aa"/><rect x="2" y="2" width="1" height="1" fill="#3a8"/><rect x="4" y="2" width="1" height="1" fill="#b83"/><rect x="1" y="3" width="1" height="1" fill="#38c"/><rect x="3" y="3" width="1" height="1" fill="#a3a"/><rect x="5" y="3" width="1" height="1" fill="#c44"/><rect x="0" y="4" width="1" height="1" fill="#36c"/><rect x="2" y="4" width="1" height="1" fill="#63c"/><rect x="4" y="4" width="1" height="1" fill="#c3a"/><rect x="6" y="4" width="1" height="1" fill="#c33"/><rect x="1" y="5" width="1" height="1" fill="#33c"/><rect x="3" y="5" width="1" height="1" fill="#a3c"/><rect x="5" y="5" width="1" height="1" fill="#c36"/><rect x="2" y="6" width="1" height="1" fill="#53c"/><rect x="4" y="6" width="1" height="1" fill="#c35"/></svg><!--/RIGHTTB-->
</body></html>
